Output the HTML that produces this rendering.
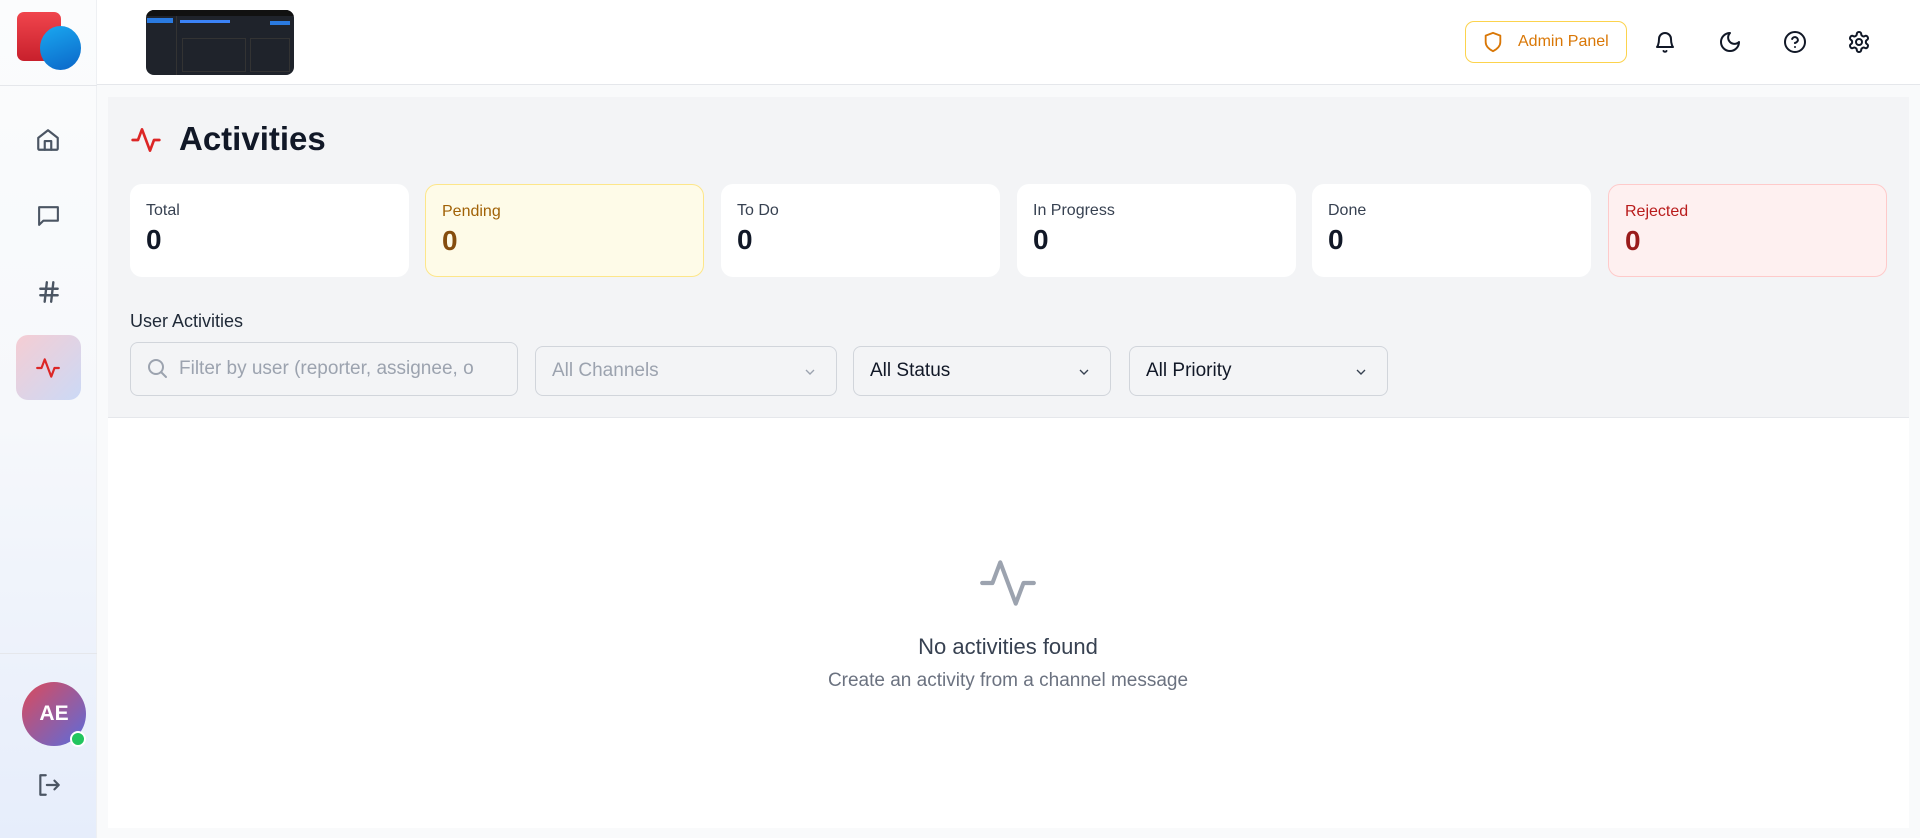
<!DOCTYPE html>
<html><head><meta charset="utf-8"><style>
*{box-sizing:border-box;margin:0;padding:0}
body{width:1920px;height:838px;overflow:hidden;font-family:"Liberation Sans",sans-serif;background:#f9fafb;position:relative;color:#111827}
.sb{position:absolute;left:0;top:0;width:97px;height:838px;background:linear-gradient(#fbfcfd 0%,#f6f8fb 50%,#e6edfb 100%);border-right:1px solid #eef0f3}
.hdr{position:absolute;left:97px;top:0;right:0;height:85px;background:#fff;border-bottom:1px solid #e5e7eb}
.abs{position:absolute}
.card{position:absolute;top:184px;width:279px;height:93px;background:#fff;border-radius:12px;padding:16px 16px}
.card .l{font-size:16px;color:#374151;margin-top:2px}
.card .v{font-size:28px;font-weight:bold;margin-top:4px}
.inp{position:absolute;border:1px solid #d1d5db;border-radius:8px;background:#f3f4f6;font-size:19px;display:flex;align-items:center}
.sel{top:346px;height:50px;padding-left:16px}
.chev{position:absolute;right:18px;top:17px}
</style></head><body>
<div class="sb">
  <div class="abs" style="left:17px;top:12px;width:44px;height:49px;border-radius:7px;background:linear-gradient(#f0454d,#c8202c)"></div>
  <div class="abs" style="left:40px;top:26px;width:41px;height:44px;border-radius:50%;background:linear-gradient(160deg,#1aa8f0,#0b66c8)"></div>
  <div class="abs" style="left:0;top:85px;width:97px;height:1px;background:#e5e7eb"></div>
  <svg class="abs" style="left:35px;top:127px" width="26" height="26" viewBox="0 0 24 24" fill="none" stroke="#4b5563" stroke-width="2" stroke-linecap="round" stroke-linejoin="round"><path d="M3 10l9-7 9 7v10a1 1 0 0 1-1 1H4a1 1 0 0 1-1-1z"/><path d="M9 21v-8h6v8"/></svg>
  <svg class="abs" style="left:36px;top:203px" width="25" height="25" viewBox="0 0 24 24" fill="none" stroke="#4b5563" stroke-width="2" stroke-linejoin="round"><path d="M3 4h18v13H7l-4 4z"/></svg>
  <svg class="abs" style="left:36px;top:279px" width="26" height="26" viewBox="0 0 24 24" fill="none" stroke="#4b5563" stroke-width="2.2" stroke-linecap="round"><path d="M4 9h16M4 15h16M10 3L8 21M16 3l-2 18"/></svg>
  <div class="abs" style="left:16px;top:335px;width:65px;height:65px;border-radius:12px;background:linear-gradient(135deg,#f5cdd3,#cbd9f6)"></div>
  <svg class="abs" style="left:35px;top:355px" width="26" height="26" viewBox="0 0 24 24" fill="none" stroke="#dc2626" stroke-width="2" stroke-linecap="round" stroke-linejoin="round"><path d="M2 12h4l3-8 6 16 3-8h4"/></svg>
  <div class="abs" style="left:0;top:653px;width:97px;height:1px;background:#e5e7eb"></div>
  <div class="abs" style="left:22px;top:682px;width:64px;height:64px;border-radius:50%;background:linear-gradient(135deg,#dc4a5a,#5a6cdc);color:#fff;font-weight:bold;font-size:21px;display:flex;align-items:center;justify-content:center">AE</div>
  <div class="abs" style="left:70px;top:731px;width:16px;height:16px;border-radius:50%;background:#22c55e;border:2.5px solid #fff"></div>
  <svg class="abs" style="left:36px;top:772px" width="26" height="26" viewBox="0 0 24 24" fill="none" stroke="#4b5563" stroke-width="2" stroke-linecap="round" stroke-linejoin="round"><path d="M9 3H4v18h5"/><path d="M10 12h11M17 8l4 4-4 4"/></svg>
</div>
<div class="hdr">
  <div class="abs" style="left:49px;top:10px;width:148px;height:65px;border-radius:8px;background:#1f232b;overflow:hidden">
    <div class="abs" style="left:0;top:0;width:148px;height:6px;background:#111"></div>
    <div class="abs" style="left:1px;top:8px;width:26px;height:5px;background:#2a7ae0"></div>
    <div class="abs" style="left:30px;top:6px;width:1px;height:59px;background:#333"></div>
    <div class="abs" style="left:34px;top:10px;width:50px;height:3px;background:#3b82f6"></div>
    <div class="abs" style="left:124px;top:11px;width:20px;height:4px;background:#2a7ae0"></div>
    <div class="abs" style="left:36px;top:28px;width:64px;height:34px;border:1px solid #333"></div>
    <div class="abs" style="left:104px;top:28px;width:40px;height:34px;border:1px solid #333"></div>
  </div>
  <div class="abs" style="left:1368px;top:21px;width:162px;height:42px;border:1px solid #fcd34d;border-radius:9px;color:#d97706;font-size:16px;display:flex;align-items:center;padding-left:52px">Admin Panel</div>
  <svg class="abs" style="left:1385px;top:31px" width="22" height="22" viewBox="0 0 24 24" fill="none" stroke="#d97706" stroke-width="2" stroke-linejoin="round"><path d="M12 2l8 3v7c0 5-4 8-8 10-4-2-8-5-8-10V5z"/></svg>
  <svg class="abs" style="left:1556px;top:30px" width="24" height="24" viewBox="0 0 24 24" fill="none" stroke="#111827" stroke-width="2" stroke-linecap="round" stroke-linejoin="round"><path d="M6 9a6 6 0 0 1 12 0c0 6 2 8 2 8H4s2-2 2-8"/><path d="M10.5 21a1.8 1.8 0 0 0 3 0"/></svg>
  <svg class="abs" style="left:1621px;top:30px" width="24" height="24" viewBox="0 0 24 24" fill="none" stroke="#111827" stroke-width="2" stroke-linejoin="round"><path d="M12 3a6 6 0 0 0 9 9 9 9 0 1 1-9-9z"/></svg>
  <svg class="abs" style="left:1686px;top:30px" width="24" height="24" viewBox="0 0 24 24" fill="none" stroke="#111827" stroke-width="2" stroke-linecap="round"><circle cx="12" cy="12" r="10"/><path d="M9.1 9a3 3 0 0 1 5.8 1c0 2-3 3-3 3"/><path d="M12 17h.01"/></svg>
  <svg class="abs" style="left:1750px;top:30px" width="24" height="24" viewBox="0 0 24 24" fill="none" stroke="#111827" stroke-width="2" stroke-linejoin="round"><path d="M12.22 2h-.44a2 2 0 0 0-2 2v.18a2 2 0 0 1-1 1.730l-.43.25a2 2 0 0 1-2 0l-.15-.08a2 2 0 0 0-2.73.73l-.22.38a2 2 0 0 0 .73 2.73l.15.1a2 2 0 0 1 1 1.72v.51a2 2 0 0 1-1 1.74l-.15.09a2 2 0 0 0-.73 2.73l.22.38a2 2 0 0 0 2.73.73l.15-.08a2 2 0 0 1 2 0l.43.25a2 2 0 0 1 1 1.73V20a2 2 0 0 0 2 2h.44a2 2 0 0 0 2-2v-.18a2 2 0 0 1 1-1.73l.43-.25a2 2 0 0 1 2 0l.15.08a2 2 0 0 0 2.73-.73l.22-.39a2 2 0 0 0-.73-2.730l-.15-.08a2 2 0 0 1-1-1.74v-.5a2 2 0 0 1 1-1.74l.15-.09a2 2 0 0 0 .73-2.73l-.22-.38a2 2 0 0 0-2.73-.73l-.15.08a2 2 0 0 1-2 0l-.43-.25a2 2 0 0 1-1-1.73V4a2 2 0 0 0-2-2z"/><circle cx="12" cy="12" r="3"/></svg>
</div>
<div class="abs" style="left:108px;top:97px;width:1801px;height:321px;background:#f3f4f6;border-bottom:1px solid #e5e7eb"></div>
<div class="abs" style="left:108px;top:418px;width:1801px;height:410px;background:#fff"></div>
<svg class="abs" style="left:130px;top:124px" width="32" height="32" viewBox="0 0 24 24" fill="none" stroke="#dc2626" stroke-width="2" stroke-linecap="round" stroke-linejoin="round"><path d="M2 12h4l3-8 6 16 3-8h4"/></svg>
<div class="abs" style="left:179px;top:120px;font-size:33px;font-weight:bold;color:#111827">Activities</div>
<div class="card" style="left:130px"><div class="l">Total</div><div class="v">0</div></div>
<div class="card" style="left:425px;background:#fefbe8;border:1px solid #fde68a"><div class="l" style="color:#a16207">Pending</div><div class="v" style="color:#854d0e">0</div></div>
<div class="card" style="left:721px"><div class="l">To Do</div><div class="v">0</div></div>
<div class="card" style="left:1017px"><div class="l">In Progress</div><div class="v">0</div></div>
<div class="card" style="left:1312px"><div class="l">Done</div><div class="v">0</div></div>
<div class="card" style="left:1608px;background:#fef0f0;border:1px solid #fecaca"><div class="l" style="color:#b91c1c">Rejected</div><div class="v" style="color:#991b1b">0</div></div>
<div class="abs" style="left:130px;top:311px;font-size:18px;color:#1f2937">User Activities</div>
<div class="inp" style="left:130px;top:342px;width:388px;height:54px;padding-left:48px;color:#9ca3af;overflow:hidden;white-space:nowrap">Filter by user (reporter, assignee, o</div>
<svg class="abs" style="left:145px;top:356px" width="24" height="24" viewBox="0 0 24 24" fill="none" stroke="#9ca3af" stroke-width="2" stroke-linecap="round"><circle cx="11" cy="11" r="7"/><path d="M21 21l-4.5-4.5"/></svg>
<div class="inp sel" style="left:535px;width:302px;color:#9ca3af">All Channels<svg class="chev" width="16" height="16" viewBox="0 0 24 24" fill="none" stroke="#9ca3af" stroke-width="2"><path d="M6 9l6 6 6-6"/></svg></div>
<div class="inp sel" style="left:853px;width:258px;color:#111827">All Status<svg class="chev" width="16" height="16" viewBox="0 0 24 24" fill="none" stroke="#374151" stroke-width="2"><path d="M6 9l6 6 6-6"/></svg></div>
<div class="inp sel" style="left:1129px;width:259px;color:#111827">All Priority<svg class="chev" width="16" height="16" viewBox="0 0 24 24" fill="none" stroke="#374151" stroke-width="2"><path d="M6 9l6 6 6-6"/></svg></div>
<svg class="abs" style="left:977px;top:552px" width="62" height="62" viewBox="0 0 24 24" fill="none" stroke="#9ca3af" stroke-width="1.6" stroke-linecap="round" stroke-linejoin="round"><path d="M2 12h4l3-8 6 16 3-8h4"/></svg>
<div class="abs" style="left:708px;width:600px;top:634px;text-align:center;font-size:22px;color:#374151">No activities found</div>
<div class="abs" style="left:708px;width:600px;top:670px;text-align:center;font-size:19px;color:#6b7280">Create an activity from a channel message</div>
</body></html>
